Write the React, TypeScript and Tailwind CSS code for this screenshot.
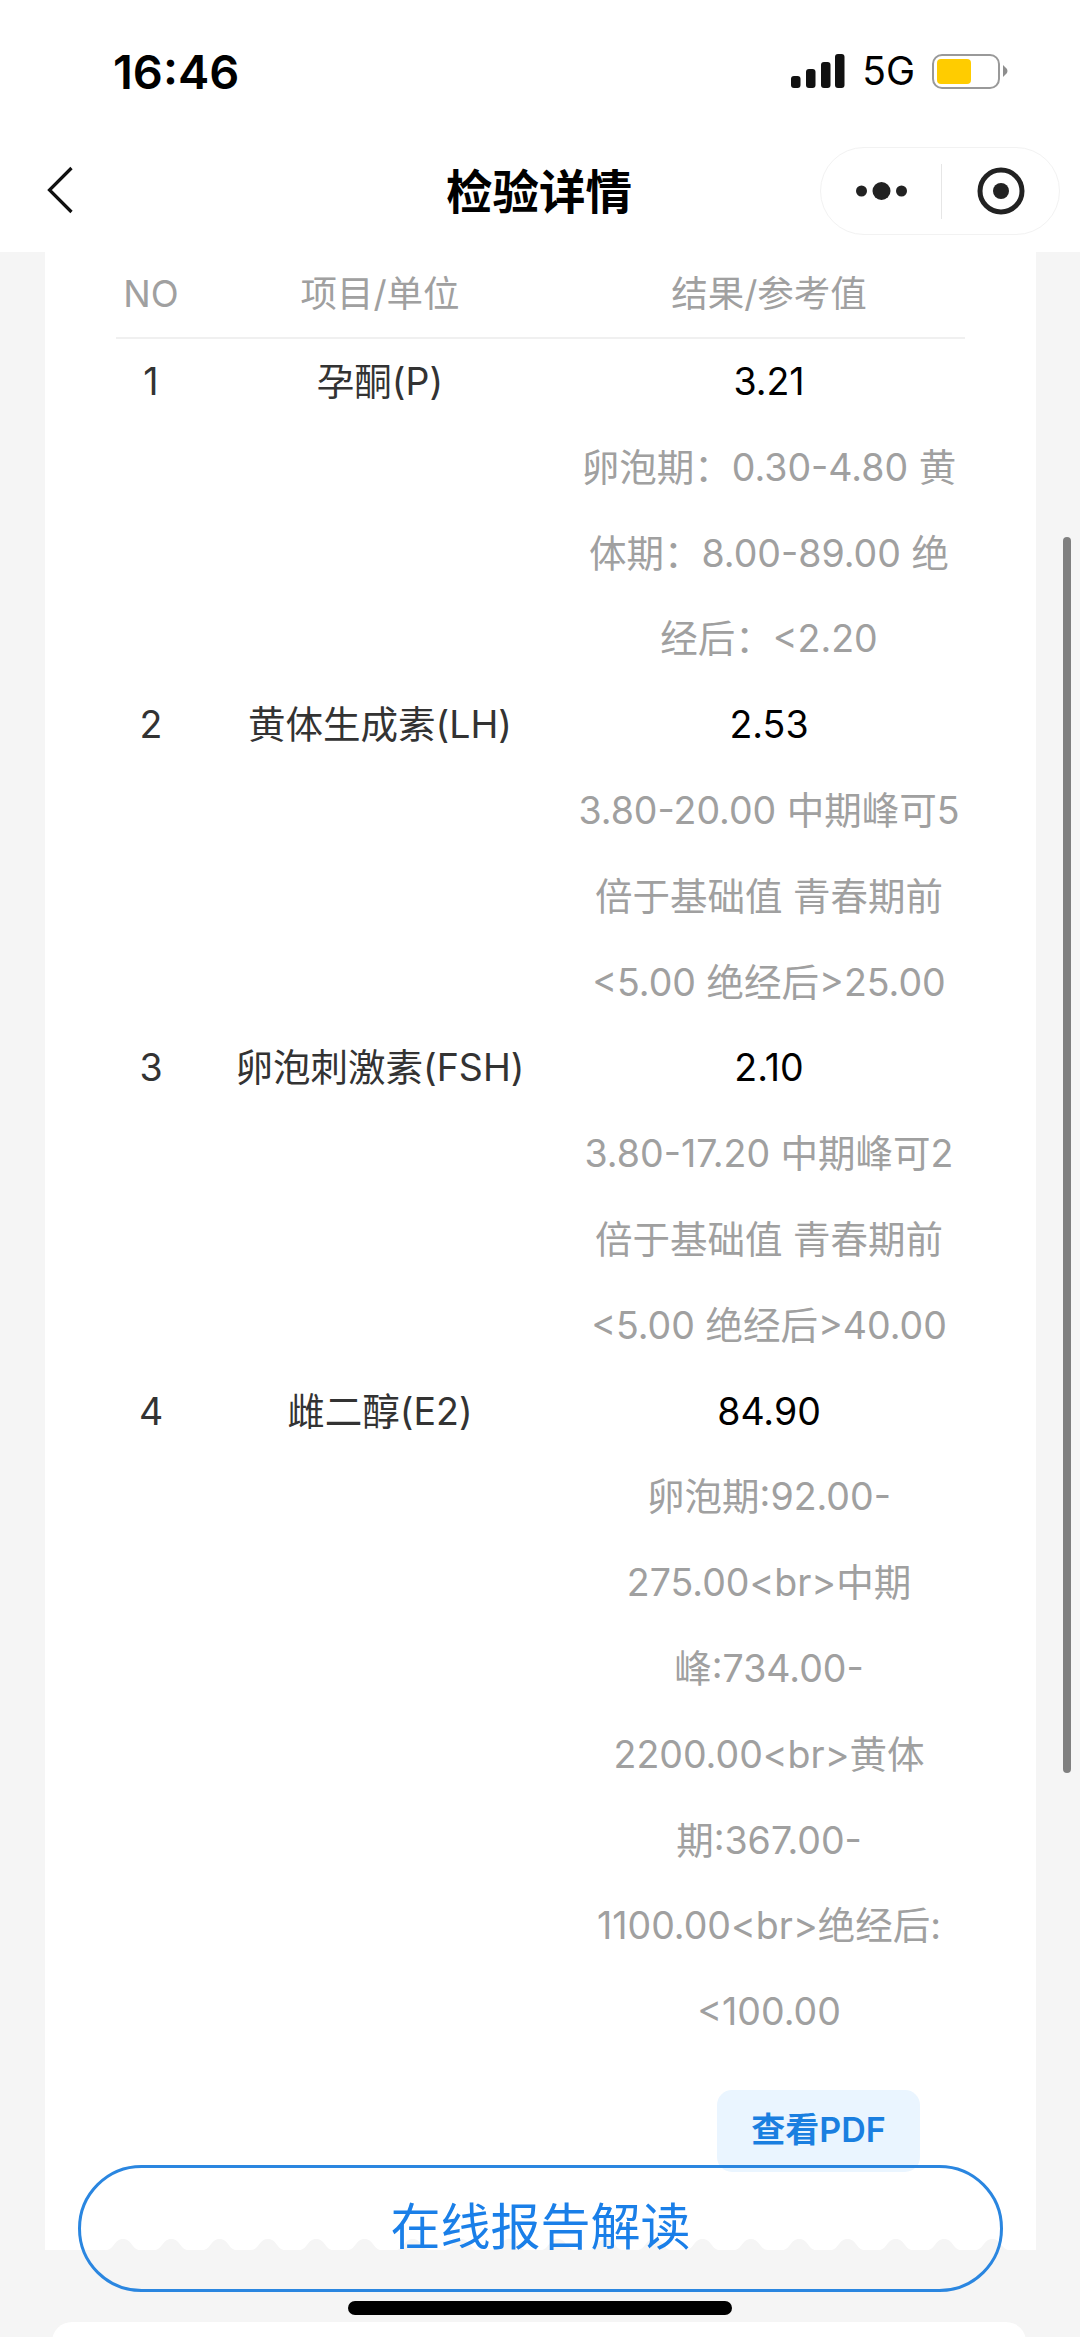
const rows = [
  { no: '1', name: '孕酮(P)', value: '3.21', ref: ['卵泡期\uFF1A0.30-4.80 黄', '体期\uFF1A8.00-89.00 绝', '经后\uFF1A<2.20'] },
  { no: '2', name: '黄体生成素(LH)', value: '2.53', ref: ['3.80-20.00 中期峰可5', '倍于基础值 青春期前', '<5.00 绝经后>25.00'] },
  { no: '3', name: '卵泡刺激素(FSH)', value: '2.10', ref: ['3.80-17.20 中期峰可2', '倍于基础值 青春期前', '<5.00 绝经后>40.00'] },
  {
    no: '4',
    name: '雌二醇(E2)',
    value: '84.90',
    ref: ['卵泡期:92.00-', '275.00<br>中期', '峰:734.00-', '2200.00<br>黄体', '期:367.00-', '1100.00<br>绝经后:', '<100.00'],
  },
];

const peaks = Array.from({ length: 19 }, (_, i) => 78 + i * 48.3);
const scallop =
  'M0 11 ' +
  peaks
    .map((p) => `L${p - 17} 11 C${p - 9} 11 ${p - 9} 0 ${p} 0 C${p + 9} 0 ${p + 9} 11 ${p + 17} 11`)
    .join(' ') +
  ' L991 11 Z';

export default function App() {
  return (
    <div className="relative flex h-[2337px] w-[1080px] flex-col overflow-hidden bg-[#f5f5f5] font-['Inter','Noto_Sans_CJK_SC',sans-serif]">
      <header className="h-[252px] shrink-0 bg-white">
        <div className="flex h-[144px] items-start justify-between pl-[113px] pr-[72px] pt-[42px]">
          <span className="text-[47px] font-semibold leading-[60px] text-black">16:46</span>
          <div className="flex items-center pt-[9px]">
            <svg width="54" height="34" viewBox="0 0 54 34" fill="#111">
              <rect x="0" y="22" width="9.5" height="12" rx="3" />
              <rect x="15" y="15" width="9.5" height="19" rx="3" />
              <rect x="30" y="8" width="9.5" height="26" rx="3" />
              <rect x="44" y="0" width="9.5" height="34" rx="3" />
            </svg>
            <span className="ml-[17px] text-[39px] leading-[40px] text-black">5G</span>
            <div className="ml-[17px] flex h-[35px] w-[68px] items-center rounded-[10px] border-2 border-[#999999] p-[3px]">
              <div className="h-[25px] w-[34px] rounded-[4px] bg-[#ffcc00]" />
            </div>
            <svg className="ml-[3px]" width="5" height="12" viewBox="0 0 5 12" fill="#8e8e8e">
              <path d="M0 0 L4 4 Q5 6 4 8 L0 12 Z" />
            </svg>
          </div>
        </div>
        <nav className="flex h-[108px] items-start pl-[46px] pr-[20px]">
          <svg className="mt-[22px]" width="28" height="48" viewBox="0 0 28 48" fill="none" stroke="#111" strokeWidth="3.2">
            <path d="M25.5 2 L3.5 24 L25.5 46" />
          </svg>
          <h1 className="ml-[372px] mt-[17px] w-[186px] text-center text-[46.5px] font-semibold leading-[62px] text-black">检验详情</h1>
          <div className="ml-auto mt-[3px] flex h-[88px] w-[240px] items-center rounded-[44px] border border-[#f2f2f2] bg-white">
            <svg className="ml-[29px]" width="62" height="20" viewBox="0 0 62 20" fill="#222">
              <circle cx="11.5" cy="10" r="5.5" />
              <circle cx="31.5" cy="10" r="9" />
              <circle cx="51.5" cy="10" r="5.5" />
            </svg>
            <div className="ml-[29px] h-[55px] w-[1px] bg-[#e6e6e6]" />
            <svg className="ml-[35px]" width="48" height="48" viewBox="0 0 48 48" fill="none">
              <circle cx="24" cy="24" r="21" stroke="#222" strokeWidth="5" />
              <circle cx="24" cy="24" r="8" fill="#222" />
            </svg>
          </div>
        </nav>
      </header>

      <main className="mx-[45px] flex h-[1998px] w-[991px] shrink-0 flex-col bg-white">
        <div className="mx-[71px] flex-1">
          <div className="grid h-[87px] grid-cols-[70px_388px_390px] items-center border-b-2 border-[#f0f0f0] text-center text-[36.5px] text-[#a0a0a0]">
            <span>NO</span>
            <span>项目/单位</span>
            <span>结果/参考值</span>
          </div>
          {rows.map((r) => (
            <div key={r.no} className="grid grid-cols-[70px_388px_390px] text-center text-[37.5px] leading-[85.8px] text-[#333333]">
              <span>{r.no}</span>
              <span>{r.name}</span>
              <div>
                <div className="text-black">{r.value}</div>
                {r.ref.map((line) => (
                  <div key={line} className="whitespace-nowrap text-[#a0a0a0]">
                    {line}
                  </div>
                ))}
              </div>
            </div>
          ))}
          <div className="mr-[45px] mt-[35px] flex justify-end">
            <div className="flex h-[82px] w-[203px] items-center justify-center rounded-[15px] bg-[#eaf5ff] pb-[2px] text-[34px] font-semibold text-[#1a7fe0]">
              查看PDF
            </div>
          </div>
        </div>
        <svg className="block shrink-0" width="991" height="11" viewBox="0 0 991 11" fill="#f5f5f5">
          <path d={scallop} />
        </svg>
      </main>

      <div className="mx-[52px] mt-[72px] h-[60px] w-[974px] shrink-0 rounded-[20px] bg-white" />

      <button className="absolute left-[78px] top-[2165px] flex h-[127px] w-[925px] items-center justify-center rounded-[64px] border-[3px] border-[#2a86e0] bg-transparent pb-[3px] text-[50px] text-[#1a7fe8]">
        在线报告解读
      </button>
      <div className="absolute left-[348px] top-[2301px] h-[14px] w-[384px] rounded-[7px] bg-black" />
      <div className="absolute left-[1063px] top-[537px] h-[1236px] w-[8px] rounded-[4px] bg-[#808080]" />
    </div>
  );
}
